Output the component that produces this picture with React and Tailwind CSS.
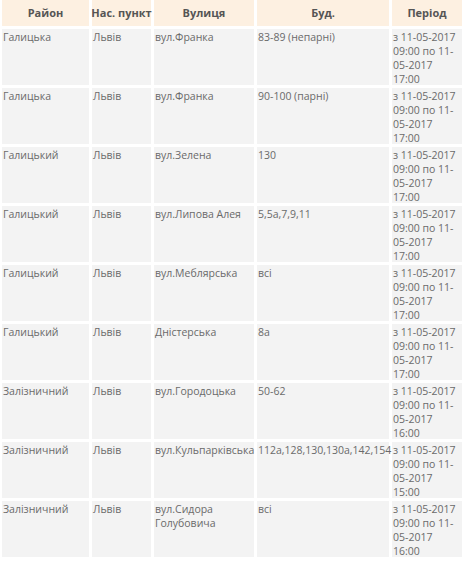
const HEADERS = ['Район', 'Нас. пункт', 'Вулиця', 'Буд.', 'Період'];

const ROWS = [
  ['Галицька', 'Львів', 'вул.Франка', '83-89 (непарні)', '17:00'],
  ['Галицька', 'Львів', 'вул.Франка', '90-100 (парні)', '17:00'],
  ['Галицький', 'Львів', 'вул.Зелена', '130', '17:00'],
  ['Галицький', 'Львів', 'вул.Липова Алея', '5,5а,7,9,11', '17:00'],
  ['Галицький', 'Львів', 'вул.Меблярська', 'всі', '17:00'],
  ['Галицький', 'Львів', 'Дністерська', '8а', '17:00'],
  ['Залізничний', 'Львів', 'вул.Городоцька', '50-62', '16:00'],
  ['Залізничний', 'Львів', 'вул.Кульпарківська', '112а,128,130,130а,142,154', '15:00'],
  ['Залізничний', 'Львів', 'вул.Сидора Голубовича', 'всі', '16:00'],
];

export default function App() {
  return (
    <div className="w-[463px] h-[561px] overflow-hidden bg-white pl-[2px] font-['Open_Sans',sans-serif] text-[10.5px]">
      <div className="grid grid-cols-[87px_59px_100px_132px_70px] gap-[3px]">
        {HEADERS.map((h) => (
          <div key={h} className="h-[26px] flex items-center justify-center bg-[#fdf0e1] font-bold text-[11px] text-[#555] whitespace-nowrap">
            {h}
          </div>
        ))}
        {ROWS.map((row, i) =>
          row.map((cell, j) => (
            <div key={i + '-' + j} className="h-[56px] bg-[#f3f3f3] pl-px pt-px text-[#6a6a6a] leading-[14px] whitespace-normal">
              {j === 4 ? (
                <>з 11-05-2017 09:00 по 11-05-2017<br />{cell}</>
              ) : (
                cell
              )}
            </div>
          ))
        )}
      </div>
    </div>
  );
}
